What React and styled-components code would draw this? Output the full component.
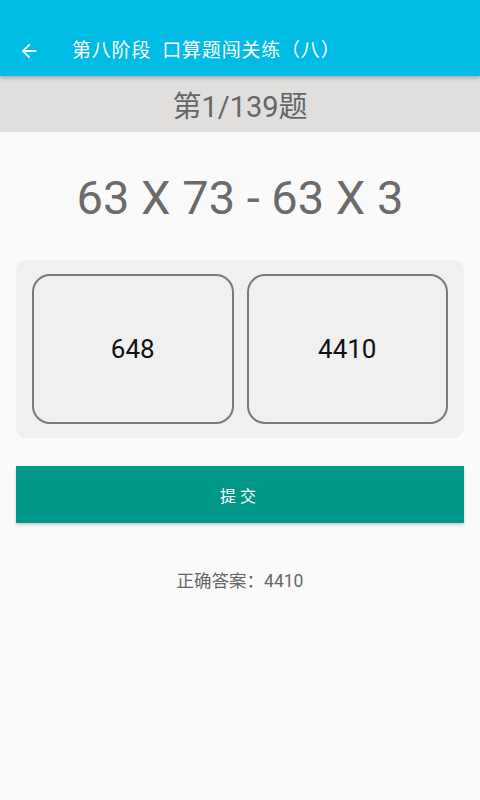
import React from 'react'
import styled, { createGlobalStyle } from 'styled-components'

const GlobalStyle = createGlobalStyle`
  html, body {
    margin: 0;
    padding: 0;
    background: #fafafa;
    font-family: Roboto, "Noto Sans CJK SC", sans-serif;
  }
`

const Page = styled.div`
  width: 480px;
  min-height: 800px;
  background: #fafafa;
  display: flex;
  flex-direction: column;
`

const Toolbar = styled.div`
  height: 76px;
  background: #00bce4;
  display: flex;
  align-items: flex-end;
  padding: 0 0 12px 18px;
  box-sizing: border-box;
  box-shadow: 0 2px 4px rgba(0, 0, 0, 0.25);
  position: relative;
  z-index: 1;
`

const BackButton = styled.div`
  width: 22px;
  height: 26px;
  display: flex;
  align-items: center;
  justify-content: center;
  margin-right: 32px;
`

const Title = styled.div`
  color: #fff;
  font-size: 19px;
  line-height: 26px;
  letter-spacing: 0.8px;
`

const Counter = styled.div`
  height: 56px;
  background: #e0dfdd;
  color: #666;
  font-size: 29px;
  display: flex;
  align-items: center;
  justify-content: center;
`

const Expression = styled.div`
  color: #6b6b6b;
  font-size: 47px;
  text-align: center;
  margin-top: 39px;
  line-height: 54px;
`

const Options = styled.div`
  margin: 35px 16px 0;
  padding: 14px 16px;
  background: #f0f0f0;
  border-radius: 10px;
  display: grid;
  grid-template-columns: 1fr 1fr;
  gap: 13px;
`

const OptionCard = styled.div`
  height: 150px;
  border: 2px solid #7a7a7a;
  border-radius: 18px;
  box-sizing: border-box;
  display: flex;
  align-items: center;
  justify-content: center;
  font-size: 26px;
  color: #111;
  background: ${p => (p.selected ? '#e4f3f1' : '#f0f0f0')};
`

const SubmitButton = styled.div`
  margin: 28px 16px 0;
  height: 57px;
  background: #009688;
  color: #fff;
  font-size: 16px;
  letter-spacing: 4px;
  display: flex;
  align-items: center;
  justify-content: center;
  box-shadow: 0 2px 3px rgba(0, 0, 0, 0.2);
`

const Answer = styled.div`
  margin-top: 44px;
  text-align: center;
  color: #666;
  font-size: 17.5px;
`

function BackArrow () {
  return (
    <svg width='22' height='22' viewBox='0 0 24 24'>
      <path d='M20 11H7.83l5.59-5.59L12 4l-8 8 8 8 1.41-1.41L7.83 13H20v-2z' fill='#fff' />
    </svg>
  )
}

export default function App () {
  const options = ['648', '4410']
  return (
    <Page>
      <GlobalStyle />
      <Toolbar>
        <BackButton><BackArrow /></BackButton>
        <Title>第八阶段&nbsp;&nbsp;口算题闯关练（八）</Title>
      </Toolbar>
      <Counter>第1/139题</Counter>
      <Expression>63 X 73 - 63 X 3</Expression>
      <Options>
        {options.map(o => <OptionCard key={o}>{o}</OptionCard>)}
      </Options>
      <SubmitButton>提交</SubmitButton>
      <Answer>正确答案：4410</Answer>
    </Page>
  )
}
